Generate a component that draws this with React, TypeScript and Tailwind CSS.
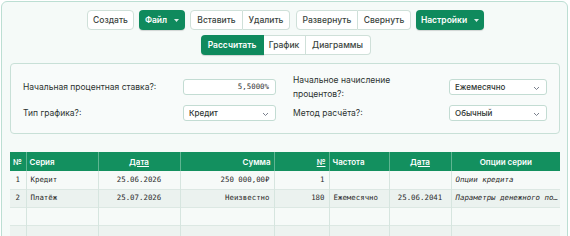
import React from "react";

const Caret = () => (
  <svg width="5" height="3" viewBox="0 0 5 3" className="ml-[7px]">
    <polygon points="0,0 5,0 2.5,3" fill="#ffffff" opacity="0.85" />
  </svg>
);

const Chevron = () => (
  <svg width="7" height="5" viewBox="0 0 7 5" className="absolute right-[6px] top-[6px]">
    <polyline points="1,1 3.5,3.5 6,1" fill="none" stroke="#6b7280" strokeWidth="0.9" />
  </svg>
);

function Btn({ children, cls = "" }: { children: React.ReactNode; cls?: string }) {
  return (
    <div
      className={
        "h-5 flex items-center justify-center border border-[#cfe0d9] bg-white text-[8.5px] font-medium text-[#3a4440] " +
        cls
      }
    >
      {children}
    </div>
  );
}

function GreenBtn({ children, cls = "" }: { children: React.ReactNode; cls?: string }) {
  return (
    <div
      className={
        "h-5 flex items-center justify-center rounded-[4px] bg-[#0f8a5d] text-[8.5px] font-semibold text-white shadow-[0_1px_1px_rgba(0,0,0,0.15)] " +
        cls
      }
    >
      {children}
    </div>
  );
}

function Select({ value, w }: { value: string; w: string }) {
  return (
    <div
      className={
        "relative h-4 rounded-[3px] border border-[#c3dcd3] bg-white text-[8px] font-medium text-[#2f3633] flex items-center pl-[5px] " +
        w
      }
    >
      {value}
      <Chevron />
    </div>
  );
}

const mono = "font-['DejaVu_Sans_Mono',monospace] text-[7.4px] text-[#2b2b2b]";

export default function App() {
  const rows = [
    { n: "1", s: "Кредит", d: "25.06.2026", sum: "250 000,00₽", k: "1", f: "", d2: "", o: "Опции кредита", bg: "bg-[#f6faf8]" },
    { n: "2", s: "Платёж", d: "25.07.2026", sum: "Неизвестно", k: "180", f: "Ежемесячно", d2: "25.06.2041", o: "Параметры денежного по…", bg: "bg-[#ebf2ef]" },
    { n: "", s: "", d: "", sum: "", k: "", f: "", d2: "", o: "", bg: "bg-[#f6faf8]" },
    { n: "", s: "", d: "", sum: "", k: "", f: "", d2: "", o: "", bg: "bg-[#edf3f0]" },
  ];
  const td = "border-r border-[#d6e5df] px-[4px] h-[18px] whitespace-nowrap overflow-hidden";
  const th = "border-r border-[#5fb592] px-[3px] h-[19px] font-semibold text-white text-[8px] whitespace-nowrap";
  return (
    <div className="w-[570px] h-[236px] overflow-hidden bg-white pt-px pl-px font-['Inter',sans-serif]">
      <div className="w-[567px] h-[260px] rounded-[6px] border border-[#bcded3] bg-[#f5faf8] pl-2 pr-[6px] pt-2">
        <div className="flex flex-col items-center gap-[5px]">
          <div className="flex items-center">
            <Btn cls="w-[47px] rounded-[4px]">Создать</Btn>
            <GreenBtn cls="w-[46px] ml-[5px]">
              Файл
              <Caret />
            </GreenBtn>
            <div className="flex ml-[5px]">
              <Btn cls="w-[53px] rounded-l-[4px]">Вставить</Btn>
              <Btn cls="w-[47px] rounded-r-[4px] border-l-0">Удалить</Btn>
            </div>
            <div className="flex ml-[6px]">
              <Btn cls="w-[62px] rounded-l-[4px]">Развернуть</Btn>
              <Btn cls="w-[53px] rounded-r-[4px] border-l-0">Свернуть</Btn>
            </div>
            <GreenBtn cls="w-[68px] ml-[5px]">
              Настройки
              <Caret />
            </GreenBtn>
          </div>
          <div className="flex items-center">
            <GreenBtn cls="w-[63px] rounded-r-none">Рассчитать</GreenBtn>
            <Btn cls="w-[42px] border-l-0">График</Btn>
            <Btn cls="w-[65px] rounded-r-[4px] border-l-0">Диаграммы</Btn>
          </div>
        </div>

        <div className="mt-2 w-[550px] rounded-[4px] border border-[#c8e0d7] bg-[#f8fbfa] pl-3 pr-3 pt-[9px] pb-[10px]">
          <div className="grid grid-cols-[160px_93px_173px_98px] grid-rows-[28px_20px] gap-y-[2px] items-center text-[8.5px] text-[#2c3330]">
            <div>Начальная процентная ставка?:</div>
            <div className="h-4 rounded-[3px] border border-[#c3dcd3] bg-white flex items-center justify-end pr-[6px] font-['DejaVu_Sans_Mono',monospace] text-[7.4px] text-[#333]">
              5,5000%
            </div>
            <div className="pl-[17px] leading-[14px]">
              <div className="w-[120px]">Начальное начисление процентов?:</div>
            </div>
            <Select value="Ежемесячно" w="w-[98px]" />
            <div>Тип графика?:</div>
            <Select value="Кредит" w="w-[93px]" />
            <div className="pl-[17px]">Метод расчёта?:</div>
            <Select value="Обычный" w="w-[98px]" />
          </div>
        </div>

        <table className="mt-[18px] w-[550px] table-fixed border-collapse">
          <colgroup>
            <col className="w-[16px]" />
            <col className="w-[72px]" />
            <col className="w-[82px]" />
            <col className="w-[94px]" />
            <col className="w-[55px]" />
            <col className="w-[60px]" />
            <col className="w-[62px]" />
            <col className="w-[109px]" />
          </colgroup>
          <thead>
            <tr className="bg-[#13905f]">
              <th className={th + " text-left px-[2px]"}>№</th>
              <th className={th + " text-left"}>Серия</th>
              <th className={th + " text-center"}>
                <span className="underline">Дата</span>
              </th>
              <th className={th + " text-right"}>Сумма</th>
              <th className={th + " text-right"}>
                <span className="underline">№</span>
              </th>
              <th className={th + " text-left"}>Частота</th>
              <th className={th + " text-center"}>
                <span className="underline">Дата</span>
              </th>
              <th className={th + " text-center border-r-0"}>Опции серии</th>
            </tr>
          </thead>
          <tbody>
            {rows.map((r, i) => (
              <tr key={i} className={r.bg + " border-b border-[#dce8e3]"}>
                <td className={td + " text-center px-0 " + mono}>{r.n}</td>
                <td className={td + " text-left " + mono}>{r.s}</td>
                <td className={td + " text-center " + mono}>{r.d}</td>
                <td className={td + " text-right " + mono}>{r.sum}</td>
                <td className={td + " text-right " + mono}>{r.k}</td>
                <td className={td + " text-left px-[2px] " + mono}>{r.f}</td>
                <td className={td + " text-center " + mono}>{r.d2}</td>
                <td className={td + " text-left italic border-r-0 " + mono}>{r.o}</td>
              </tr>
            ))}
          </tbody>
        </table>
      </div>
    </div>
  );
}
